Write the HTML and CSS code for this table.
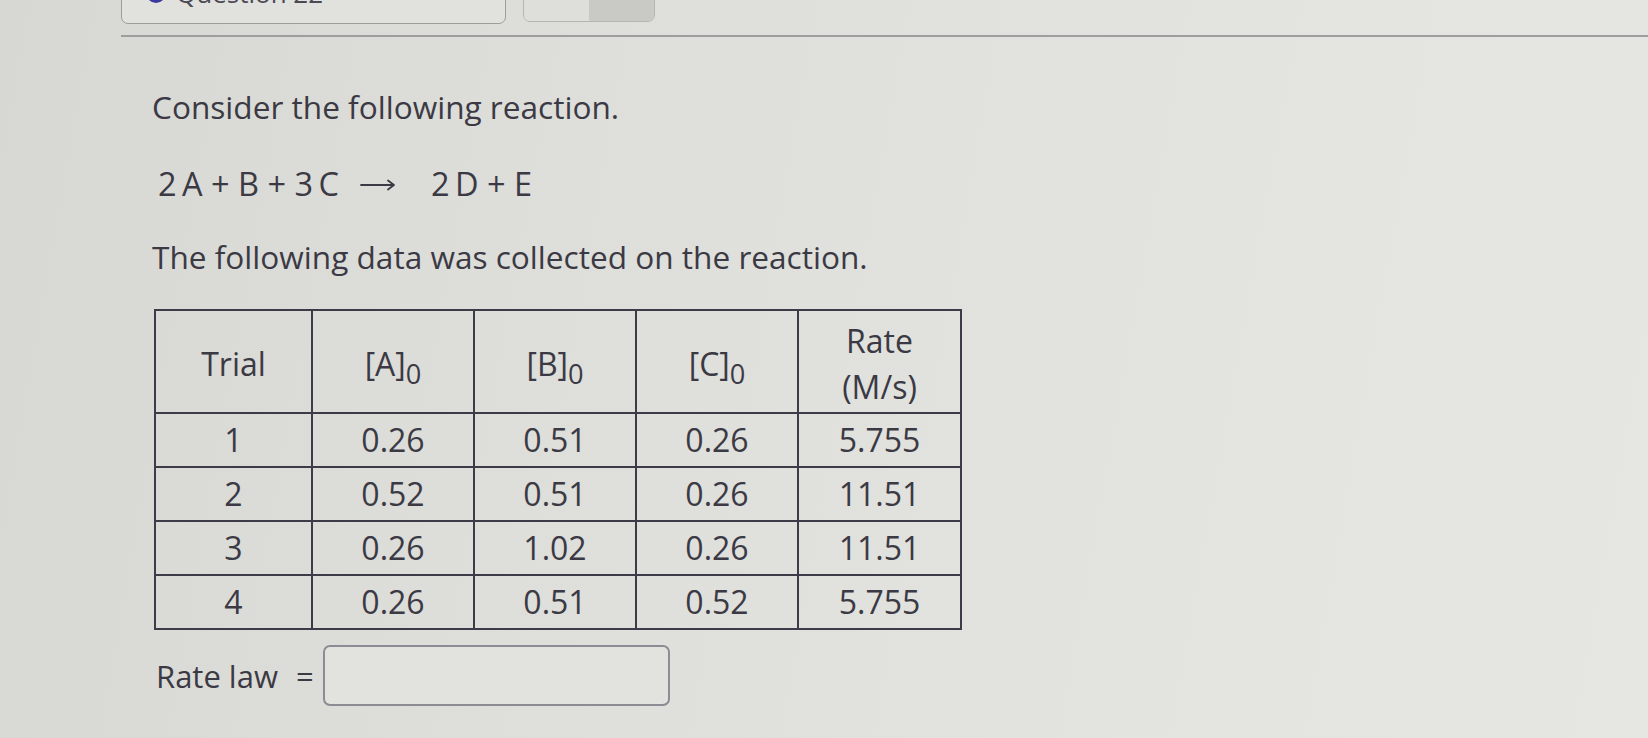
FILE: index.html
```html
<!DOCTYPE html>
<html lang="en">
<head>
<meta charset="utf-8">
<title>Question 22</title>
<link rel="stylesheet" href="styles.css">
</head>
<body>
<header class="topbar">
  <div class="tabs">
    <div class="qtab"><span class="ring"></span><span class="qlabel">Question 22</span></div>
    <div class="navbtn"><span class="nav-left"></span><span class="nav-right"></span></div>
  </div>
  <div class="rule"></div>
</header>
<main class="content">
  <p class="intro first">Consider the following reaction.</p>
  <p class="equation"><span class="side">2&#8201;A + B + 3&#8201;C</span><svg class="arrow" width="36" height="14" viewBox="0 0 36 14" aria-label="yields"><path d="M1 7 H34 M28 2.5 L34 7 L28 11.5" fill="none" stroke="#3b3a44" stroke-width="1.8" stroke-linecap="round" stroke-linejoin="round"/></svg><span class="side">2&#8201;D + E</span></p>
  <p class="intro data-line">The following data was collected on the reaction.</p>
  <table class="data">
    <thead>
      <tr>
        <th class="c-trial">Trial</th>
        <th>[A]<sub>0</sub></th>
        <th>[B]<sub>0</sub></th>
        <th>[C]<sub>0</sub></th>
        <th class="c-rate">Rate<br>(M/s)</th>
      </tr>
    </thead>
    <tbody>
      <tr><td>1</td><td>0.26</td><td>0.51</td><td>0.26</td><td>5.755</td></tr>
      <tr><td>2</td><td>0.52</td><td>0.51</td><td>0.26</td><td>11.51</td></tr>
      <tr><td>3</td><td>0.26</td><td>1.02</td><td>0.26</td><td>11.51</td></tr>
      <tr><td>4</td><td>0.26</td><td>0.51</td><td>0.52</td><td>5.755</td></tr>
    </tbody>
  </table>
  <div class="answer">
    <span class="answer-label">Rate law</span>
    <span class="equals">=</span>
    <span class="answer-box"></span>
  </div>
</main>
</body>
</html>
```

FILE: styles.css
```css
html, body {
  margin: 0;
  padding: 0;
}
body {
  width: 1648px;
  height: 738px;
  overflow: hidden;
  background: linear-gradient(100deg, #d7d7d3 0%, #dededb 35%, #e3e3e0 70%, #e6e6e3 100%);
  font-family: "Open Sans", "Liberation Sans", sans-serif;
  color: #3b3a44;
}
.topbar {
  padding-left: 121px;
}
.tabs {
  display: flex;
  align-items: flex-end;
  gap: 17px;
  height: 24px;
}
.qtab {
  width: 385px;
  height: 60px;
  box-sizing: border-box;
  border: 1.5px solid #9d9d9b;
  border-radius: 7px;
  background: #e1e1de;
  display: flex;
  align-items: flex-end;
  gap: 10px;
  padding: 0 0 21px 24px;
}
.ring {
  width: 20px;
  height: 20px;
  box-sizing: border-box;
  border: 3px solid #3b3aa0;
  border-radius: 50%;
  margin-bottom: -1px;
}
.qlabel {
  font-size: 26px;
  line-height: 26px;
  color: #4a4a55;
  margin-bottom: -4px;
}
.navbtn {
  width: 132px;
  height: 60px;
  margin-bottom: 2px;
  display: flex;
  border: 1.5px solid #b5b5b2;
  border-radius: 7px;
  overflow: hidden;
  box-sizing: border-box;
}
.nav-left {
  flex: 0 0 65px;
  background: #dededb;
}
.nav-right {
  flex: 1;
  background: #c9c9c6;
}
.rule {
  height: 2px;
  background: #9e9e9c;
  margin-top: 11px;
}
.content {
  padding-left: 152px;
}
.intro {
  margin: 0;
  font-size: 31.6px;
  line-height: 40px;
}
.intro.first {
  padding-top: 50px;
}
.equation {
  margin: 37px 0 0 6px;
  font-size: 32.5px;
  line-height: 40px;
  display: flex;
  align-items: center;
}
.arrow {
  margin: 2px 35px 0 21px;
}
.data-line {
  margin-top: 33px;
}
.data {
  margin-top: 32px;
  margin-left: 2px;
  width: 808px;
  table-layout: fixed;
  border-collapse: collapse;
  border: 2px solid #3d3b48;
  font-size: 32px;
  font-weight: 400;
}
.data th, .data td {
  border: 2px solid #3d3b48;
  text-align: center;
  padding: 0;
  font-weight: 400;
  color: #3b3a44;
}
.data th {
  width: 162px;
}
.data th.c-trial {
  width: 157px;
}
.data th.c-rate {
  width: 163px;
}
.data thead th {
  height: 103px;
  line-height: 46px;
  padding-top: 4px;
  box-sizing: border-box;
}
.data td {
  height: 52px;
  line-height: 40px;
}
.data sub {
  font-size: 0.85em;
  vertical-align: -0.28em;
  line-height: 0;
}
.answer {
  display: flex;
  align-items: center;
  margin-top: 15px;
  margin-left: 4px;
  font-size: 31px;
}
.answer-label {
  margin-right: 18px;
}
.equals {
  margin-right: 9px;
}
.answer-box {
  width: 347px;
  height: 61px;
  box-sizing: border-box;
  border: 2px solid #8d8c94;
  border-radius: 7px;
  background: #e2e2df;
}
```
